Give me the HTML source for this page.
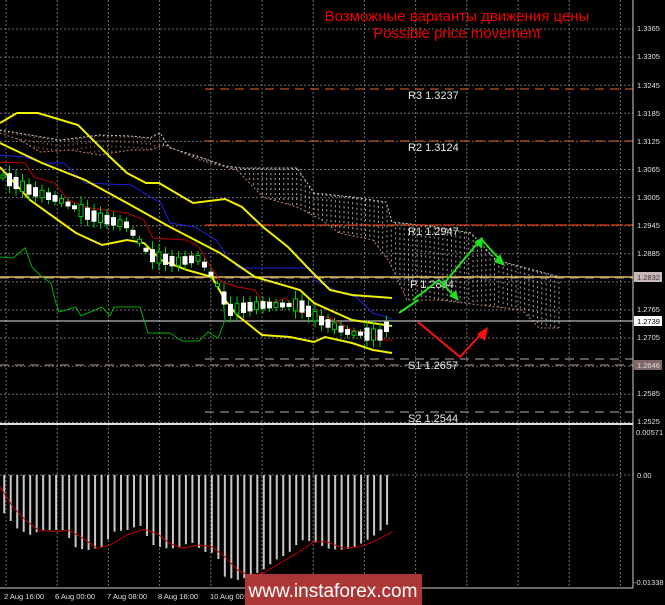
<!DOCTYPE html>
<html><head><meta charset="utf-8"><style>
html,body{margin:0;padding:0;background:#000;width:665px;height:605px;overflow:hidden}
svg{display:block}
text{font-family:"Liberation Sans",sans-serif}
</style></head><body>
<svg id="s" width="665" height="605" xmlns="http://www.w3.org/2000/svg">
<rect width="665" height="605" fill="#000"/>
<g id="grid" stroke="#8a8a8a" stroke-width="1" stroke-dasharray="2,2" opacity="0.8"></g>
<g id="cloud"></g>
<g stroke-width="1.2">
<line x1="205" y1="89" x2="633" y2="89" stroke="#c0502a" stroke-dasharray="9,6"/>
<line x1="205" y1="141" x2="633" y2="141" stroke="#c0502a" stroke-dasharray="9,6"/>
<line x1="205" y1="225" x2="633" y2="225" stroke="#e04010" stroke-dasharray="12,2"/>
<line x1="0" y1="278" x2="633" y2="278" stroke="#8a7070" stroke-dasharray="9,6"/>
<line x1="0" y1="277" x2="633" y2="277" stroke="#e0c060" stroke-width="1.5"/>
<line x1="205" y1="359" x2="633" y2="359" stroke="#9a8a8a" stroke-dasharray="9,6"/>
<line x1="0" y1="365" x2="633" y2="365" stroke="#806868" stroke-dasharray="9,6" stroke-width="1.6"/>
<line x1="205" y1="412" x2="633" y2="412" stroke="#9a8a8a" stroke-dasharray="9,6"/>
<line x1="0" y1="321" x2="633" y2="321" stroke="#b8b8b8"/>
</g>
<g fill="#e8e8e8" font-size="11" style="font-family:'Liberation Mono',monospace">
<text x="408" y="99">R3 1.3237</text>
<text x="408" y="151">R2 1.3124</text>
<text x="408" y="235">R1 1.2947</text>
<text x="410" y="288">P 1.2834</text>
<text x="408" y="369">S1 1.2657</text>
<text x="408" y="422">S2 1.2544</text>
</g>
<g fill="none" stroke-width="1">
<polyline stroke="#00b000" points="0,257 13,258 25,248 32,267 42,277 51,283 55,300 59,312 76,307 81,316 102,307 110,316 114,307 140,307 148,333 170,333 182,341 199,341 208,332 218,338 225,320 223,300"/>
<polyline stroke="#2020e0" points="0,155 25,157 42,163 64,163 85,183 131,185 144,193 161,203 170,223 195,227 216,240 225,253 238,268 310,268 314,280 339,292 356,297 373,313 392,319"/>
<polyline stroke="#c00000" points="0,162 25,163 34,177 55,183 68,200 89,208 106,210 127,213 144,220 153,238 187,240 199,247 208,263 220,280 225,283 238,287 255,290 262,302 275,302 285,298 300,312 330,318 352,330 370,333 380,340 392,340"/>
<polyline stroke="#f0f000" stroke-width="2" points="0,123 17,113 38,113 78,125 110,157 127,173 146,183 159,183 193,203 225,199 242,207 263,227 288,247 310,270 330,290 352,295 392,298"/>
<polyline stroke="#f0f000" stroke-width="2" points="0,143 42,163 85,180 127,203 170,227 220,253 255,277 300,290 314,303 352,320 392,326"/>
<polyline stroke="#f0f000" stroke-width="2" points="0,167 30,200 76,233 102,245 127,240 144,243 161,260 187,270 212,277 225,300 237,315 262,335 290,337 314,342 325,337 352,343 373,350 392,353"/>
</g>
<g id="candles"></g>
<g stroke-width="2" fill="none">
<polyline stroke="#20e020" points="399,313 418,300"/>
<polyline stroke="#20e020" points="413,300 439,280 456,298"/>
<polyline stroke="#20e020" points="441,287 481,239 503,263"/>
<polyline stroke="#ff1010" points="418,322 460,357 483,332"/>
</g>
<g stroke="none">
<polygon fill="#20e020" points="474,242 483,237 482,249"/>
<polygon fill="#20e020" points="505,266 494,262 500,254"/>
<polygon fill="#20e020" points="459,301 449,296 456,290"/>
<polygon fill="#ff1010" points="488,327 485,341 477,334"/>
</g>
<g fill="#ee0000" font-size="15" text-anchor="middle">
<text x="457" y="21">Возможные варианты движения цены</text>
<text x="457" y="38">Possible price movement</text>
</g>
<line x1="633" y1="0" x2="633" y2="588" stroke="#cfcfcf"/>
<line x1="0" y1="424" x2="633" y2="424" stroke="#e0e0e0" stroke-width="2"/>
<line x1="0" y1="588" x2="633" y2="588" stroke="#cfcfcf"/>
<g id="hist"></g>
<polyline id="sig" fill="none" stroke="#c00000" stroke-width="1"/>
<g fill="#e0e0e0" font-size="7.5">
<text x="637" y="31">1.3365</text><text x="637" y="59">1.3305</text><text x="637" y="88">1.3245</text>
<text x="637" y="116">1.3185</text><text x="637" y="144">1.3125</text><text x="637" y="172">1.3065</text>
<text x="637" y="200">1.3005</text><text x="637" y="228">1.2945</text><text x="637" y="256">1.2885</text>
<text x="637" y="312">1.2765</text><text x="637" y="340">1.2705</text><text x="637" y="396">1.2585</text>
<text x="637" y="424">1.2525</text><text x="636" y="435">0.00571</text><text x="637" y="478">0.00</text>
<text x="634" y="585">-0.01338</text>
</g>
<rect x="634" y="272" width="28" height="10" fill="#c8b8b8"/><text x="637" y="280" font-size="7.5" fill="#333">1.2832</text>
<rect x="634" y="316" width="28" height="10" fill="#fff"/><text x="637" y="324" font-size="7.5" fill="#000">1.2739</text>
<rect x="634" y="360" width="28" height="10" fill="#806868"/><text x="637" y="368" font-size="7.5" fill="#ddd">1.2646</text>
<g fill="#e0e0e0" font-size="7.5">
<text x="4" y="599">2 Aug 16:00</text><text x="55" y="599">6 Aug 00:00</text><text x="107" y="599">7 Aug 08:00</text>
<text x="158" y="599">8 Aug 16:00</text><text x="210" y="599">10 Aug 00:00</text>
</g>
<rect x="245" y="574" width="177" height="31" fill="#b83a3a" opacity="0.93"/>
<text x="333" y="597" text-anchor="middle" font-size="19" fill="#fff">www.instaforex.com</text>
</svg>
<script>
(function(){
var NS="http://www.w3.org/2000/svg";
function el(p,t,a){var e=document.createElementNS(NS,t);for(var k in a)e.setAttribute(k,a[k]);p.appendChild(e);return e;}
var g=document.getElementById('grid');
for(var x=6;x<633;x+=51.2)el(g,'line',{x1:x,y1:0,x2:x,y2:588});
for(var y=29;y<424;y+=28.1)el(g,'line',{x1:0,y1:y,x2:633,y2:y});
el(g,'line',{x1:0,y1:475,x2:633,y2:475});
var c=document.getElementById('cloud');
function interp(pts,x){for(var i=0;i<pts.length-1;i++){if(x>=pts[i][0]&&x<=pts[i+1][0]){var t=(x-pts[i][0])/(pts[i+1][0]-pts[i][0]);return pts[i][1]+t*(pts[i+1][1]-pts[i][1]);}}return pts[pts.length-1][1];}
var A=[[0,130],[30,135],[60,140],[100,135],[130,136],[150,138],[155,135],[160,133],[170,148],[200,157],[225,166],[242,168],[297,168],[314,193],[352,197],[386,202],[392,222],[430,226],[471,233],[496,260],[522,267],[560,277]];
var B=[[0,133],[20,140],[40,152],[70,150],[100,155],[130,150],[150,150],[165,145],[200,160],[237,170],[263,197],[297,207],[322,220],[339,233],[373,240],[390,263],[407,300],[440,300],[480,305],[522,310],[539,328],[560,328]];
for(var x=0;x<=560;x+=4.3){var a=interp(A,x),b=interp(B,x);var t=Math.min(a,b),bt=Math.max(a,b);var col=(x<160)?'#b07050':'#cfcfcf';el(c,'line',{x1:x,y1:t,x2:x,y2:bt,stroke:col,'stroke-width':1,'stroke-dasharray':'2,3',opacity:0.8});}
function pl(pts,col){el(c,'polyline',{points:pts.map(function(p){return p.join(',')}).join(' '),fill:'none',stroke:col,'stroke-dasharray':'2,2','stroke-width':1});}
pl(A,'#c8c8c8');pl(B,'#c08060');
var cg=document.getElementById('candles');
var mid=[[0,175],[30,190],[60,200],[90,215],[127,225],[150,255],[175,262],[200,258],[215,280],[230,310],[260,305],[300,305],[320,320],[350,333],[380,335],[392,320]];
for(var i=0;i<60;i++){var x=3+i*6.5;if(x>392)break;var m=interp(mid,x);var h=(i*7919%11)/11;var len=3+h*10;var bull=(i%3==0);var ty=m-len/2;
el(cg,'line',{x1:x,y1:ty-3-h*6,x2:x,y2:ty+len+3+h*5,stroke:'#00d000'});
el(cg,'rect',{x:x-2,y:ty,width:4,height:len,fill:bull?'#000':'#fff',stroke:bull?'#00d000':'#fff','stroke-width':1});}
var hg=document.getElementById('hist');
var D=[[10,640],[40,685],[70,705],[100,690],[150,690],[180,745],[210,750],[240,740],[270,695],[300,690],[330,675],[360,735],[390,745],[420,745],[450,725],[480,755],[510,760],[530,830],[560,840],[590,830],[620,810],[650,780],[680,760],[710,720],[740,725],[770,745],[800,750],[830,745],[860,725],[890,700],[925,660]];
for(var zx=10;zx<=926;zx+=15.3){var x=zx/2.358;var d=interp(D,zx)/3+300;el(hg,'rect',{x:x-1,y:475,width:2,height:d-475,fill:'#c8c8c8'});}
var S=[[0,560],[30,620],[60,660],[90,690],[130,695],[160,690],[190,710],[230,745],[260,735],[300,705],[340,688],[370,700],[400,730],[430,745],[470,735],[500,740],[530,770],[560,810],[590,828],[620,820],[660,790],[700,760],[740,725],[770,725],[810,745],[850,740],[890,720],[925,695]];
document.getElementById('sig').setAttribute('points',S.map(function(p){return (p[0]/2.358).toFixed(1)+','+(p[1]/3+300).toFixed(1)}).join(' '));
})();
</script>
</body></html>
